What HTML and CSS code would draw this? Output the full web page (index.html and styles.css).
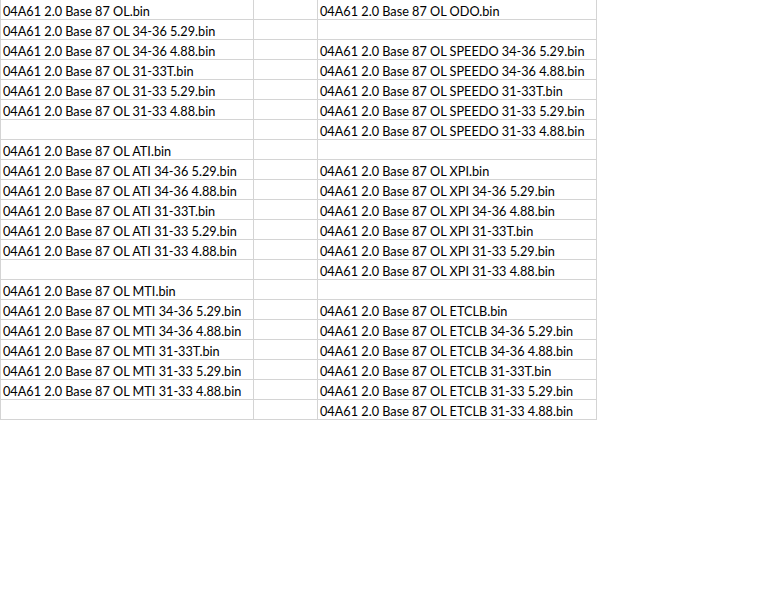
FILE: index.html
```html
<!DOCTYPE html>
<html lang="en">
<head>
  <meta charset="UTF-8">
  <title>Sheet1</title>
  <link rel="stylesheet" href="styles.css">
</head>
<body>

  <!-- bin file list -->
  <table class="sheet">
    <colgroup>
      <col class="col-a">
      <col class="col-b">
      <col class="col-c">
    </colgroup>
    <tr><td>04A61 2.0 Base 87 OL.bin</td><td></td><td>04A61 2.0 Base 87 OL ODO.bin</td></tr>
    <tr><td>04A61 2.0 Base 87 OL 34-36 5.29.bin</td><td></td><td></td></tr>
    <tr><td>04A61 2.0 Base 87 OL 34-36 4.88.bin</td><td></td><td>04A61 2.0 Base 87 OL SPEEDO 34-36 5.29.bin</td></tr>
    <tr><td>04A61 2.0 Base 87 OL 31-33T.bin</td><td></td><td>04A61 2.0 Base 87 OL SPEEDO 34-36 4.88.bin</td></tr>
    <tr><td>04A61 2.0 Base 87 OL 31-33 5.29.bin</td><td></td><td>04A61 2.0 Base 87 OL SPEEDO 31-33T.bin</td></tr>
    <tr><td>04A61 2.0 Base 87 OL 31-33 4.88.bin</td><td></td><td>04A61 2.0 Base 87 OL SPEEDO 31-33 5.29.bin</td></tr>
    <tr><td></td><td></td><td>04A61 2.0 Base 87 OL SPEEDO 31-33 4.88.bin</td></tr>
    <tr><td>04A61 2.0 Base 87 OL ATI.bin</td><td></td><td></td></tr>
    <tr><td>04A61 2.0 Base 87 OL ATI 34-36 5.29.bin</td><td></td><td>04A61 2.0 Base 87 OL XPI.bin</td></tr>
    <tr><td>04A61 2.0 Base 87 OL ATI 34-36 4.88.bin</td><td></td><td>04A61 2.0 Base 87 OL XPI 34-36 5.29.bin</td></tr>
    <tr><td>04A61 2.0 Base 87 OL ATI 31-33T.bin</td><td></td><td>04A61 2.0 Base 87 OL XPI 34-36 4.88.bin</td></tr>
    <tr><td>04A61 2.0 Base 87 OL ATI 31-33 5.29.bin</td><td></td><td>04A61 2.0 Base 87 OL XPI 31-33T.bin</td></tr>
    <tr><td>04A61 2.0 Base 87 OL ATI 31-33 4.88.bin</td><td></td><td>04A61 2.0 Base 87 OL XPI 31-33 5.29.bin</td></tr>
    <tr><td></td><td></td><td>04A61 2.0 Base 87 OL XPI 31-33 4.88.bin</td></tr>
    <tr><td>04A61 2.0 Base 87 OL MTI.bin</td><td></td><td></td></tr>
    <tr><td>04A61 2.0 Base 87 OL MTI 34-36 5.29.bin</td><td></td><td>04A61 2.0 Base 87 OL ETCLB.bin</td></tr>
    <tr><td>04A61 2.0 Base 87 OL MTI 34-36 4.88.bin</td><td></td><td>04A61 2.0 Base 87 OL ETCLB 34-36 5.29.bin</td></tr>
    <tr><td>04A61 2.0 Base 87 OL MTI 31-33T.bin</td><td></td><td>04A61 2.0 Base 87 OL ETCLB 34-36 4.88.bin</td></tr>
    <tr><td>04A61 2.0 Base 87 OL MTI 31-33 5.29.bin</td><td></td><td>04A61 2.0 Base 87 OL ETCLB 31-33T.bin</td></tr>
    <tr><td>04A61 2.0 Base 87 OL MTI 31-33 4.88.bin</td><td></td><td>04A61 2.0 Base 87 OL ETCLB 31-33 5.29.bin</td></tr>
    <tr><td></td><td></td><td>04A61 2.0 Base 87 OL ETCLB 31-33 4.88.bin</td></tr>
  </table>

</body>
</html>
```

FILE: styles.css
```css
body {
  margin: 0;
  background: #fff;
  color: #000;
  font-family: Lato, 'Liberation Sans', sans-serif;
  font-size: 12.7px;
}

.sheet {
  border-collapse: collapse;
  table-layout: fixed;
  width: 596px;
}

.col-a {
  width: 253px;
}

.col-b {
  width: 64px;
}

.col-c {
  width: 279px;
}

.sheet td {
  height: 16px;
  padding: 3px 0 0 2px;
  border: 1px solid #d4d4d4;
  white-space: nowrap;
  overflow: hidden;
  line-height: 16px;
  vertical-align: top;
}

.sheet tr:first-child td {
  border-top: none;
}
```
